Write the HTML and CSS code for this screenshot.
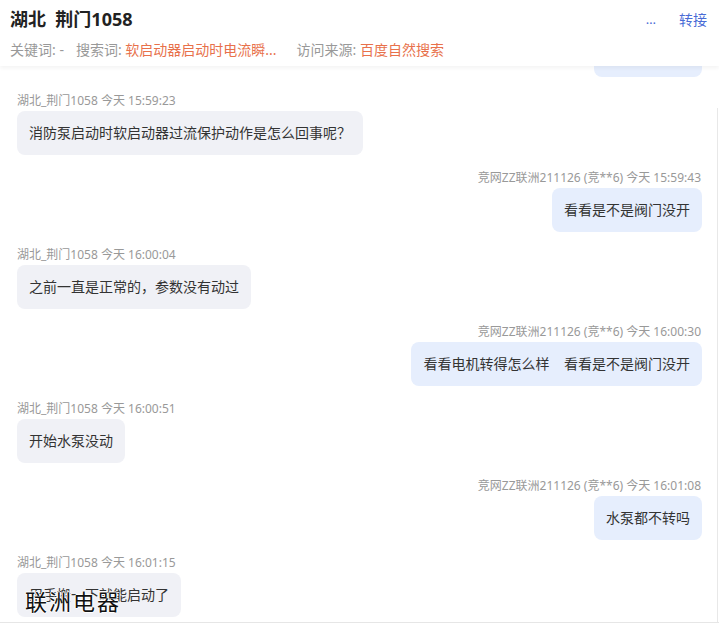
FILE: index.html
```html
<!DOCTYPE html>
<html lang="zh-CN">
<head>
<meta charset="utf-8">
<link rel="stylesheet" href="styles.css">
</head>
<body>
<div class="app">
  <header class="head">
    <div class="head-top">
      <div class="title">湖北&nbsp;&nbsp;荆门1058</div>
      <div class="actions">
        <span class="more">…</span>
        <span class="transfer">转接</span>
      </div>
    </div>
    <div class="meta-row">
      <span class="item"><span class="label">关键词:</span> <span class="val gray">-</span></span>
      <span class="item"><span class="label">搜索词:</span> <span class="val orange trunc">软启动器启动时电流瞬...</span></span>
      <span class="item"><span class="label">访问来源:</span> <span class="val orange">百度自然搜索</span></span>
    </div>
  </header>
  <main class="chat">
    <div class="msg right tail"><div class="bubble cut"></div></div>

    <div class="msg left">
      <div class="meta">湖北_荆门1058 今天 15:59:23</div>
      <div class="bubble">消防泵启动时软启动器过流保护动作是怎么回事呢？</div>
    </div>
    <div class="msg right">
      <div class="meta">竞网ZZ联洲211126 (竞**6) 今天 15:59:43</div>
      <div class="bubble">看看是不是阀门没开</div>
    </div>
    <div class="msg left">
      <div class="meta">湖北_荆门1058 今天 16:00:04</div>
      <div class="bubble">之前一直是正常的，参数没有动过</div>
    </div>
    <div class="msg right">
      <div class="meta">竞网ZZ联洲211126 (竞**6) 今天 16:00:30</div>
      <div class="bubble">看看电机转得怎么样&nbsp;&nbsp;&nbsp;&nbsp;看看是不是阀门没开</div>
    </div>
    <div class="msg left">
      <div class="meta">湖北_荆门1058 今天 16:00:51</div>
      <div class="bubble">开始水泵没动</div>
    </div>
    <div class="msg right">
      <div class="meta">竞网ZZ联洲211126 (竞**6) 今天 16:01:08</div>
      <div class="bubble">水泵都不转吗</div>
    </div>
    <div class="msg left">
      <div class="meta">湖北_荆门1058 今天 16:01:15</div>
      <div class="bubble">用手搬一下就能启动了</div>
    </div>
    <div class="scrollbar"></div>
    <div class="watermark">联洲电器</div>
  </main>
</div>
</body>
</html>
```
FILE: styles.css
```css
* { box-sizing: border-box; }
html, body { margin: 0; padding: 0; background: #fff; }
body {
  font-family: "Noto Sans", "Noto Sans CJK SC", "Liberation Sans", sans-serif;
  color: #333;
  width: 719px;
  height: 625px;
  overflow: hidden;
}
.app { display: flex; flex-direction: column; height: 625px; }
.head {
  height: 66px;
  padding: 7px 12px 0 10px;
  background: #fff;
  box-shadow: 0 2px 4px rgba(0,0,0,0.05);
  position: relative;
  z-index: 2;
  flex: none;
}
.head-top { display: flex; justify-content: space-between; align-items: center; height: 24px; }
.title { font-size: 18px; font-weight: 700; color: #222; line-height: 24px; }
.actions { display: flex; align-items: center; gap: 23px; font-size: 14px; color: #4a6cd6; }
.more { font-size: 13px; line-height: 20px; }
.meta-row {
  margin-top: 9px;
  display: flex;
  align-items: center;
  font-size: 14px;
  line-height: 20px;
  white-space: nowrap;
}
.item { margin-right: 20px; }
.item:first-child { margin-right: 12px; }
.label { color: #999; }
.gray { color: #999; }
.orange { color: #e8714b; }
.chat {
  flex: none;
  height: 557px;
  border-bottom: 1px solid #e6e6e6;
  padding: 0 17px;
  position: relative;
  overflow: hidden;
  display: flex;
  flex-direction: column;
}
.msg { display: flex; flex-direction: column; margin-bottom: 14px; }
.msg.left { align-items: flex-start; }
.msg.right { align-items: flex-end; }
.meta { font-size: 12px; color: #999; line-height: 18px; margin-bottom: 1px; }
.msg.right .meta { margin-right: 1px; }
.bubble {
  height: 44px;
  padding: 0 12px;
  font-size: 14px;
  line-height: 44px;
  border-radius: 8px;
  background: #f0f1f6;
  white-space: nowrap;
  color: #333;
}
.msg.right .bubble { background: #e6eefd; }
.msg.tail { margin-bottom: 15px; }
.bubble.cut { width: 108px; height: 11px; border-radius: 0 0 8px 8px; }
.scrollbar {
  position: absolute;
  right: 1px;
  top: 42px;
  bottom: 0;
  width: 1px;
  background: #e8e8e8;
}
.watermark {
  position: absolute;
  left: 25px;
  top: 519px;
  font-family: "Noto Sans CJK SC", sans-serif;
  font-size: 22px;
  line-height: 30px;
  color: #111;
  letter-spacing: 2px;
  text-shadow: 1px 0 0 #fff, -1px 0 0 #fff, 0 1px 0 #fff, 0 -1px 0 #fff;
}
```
